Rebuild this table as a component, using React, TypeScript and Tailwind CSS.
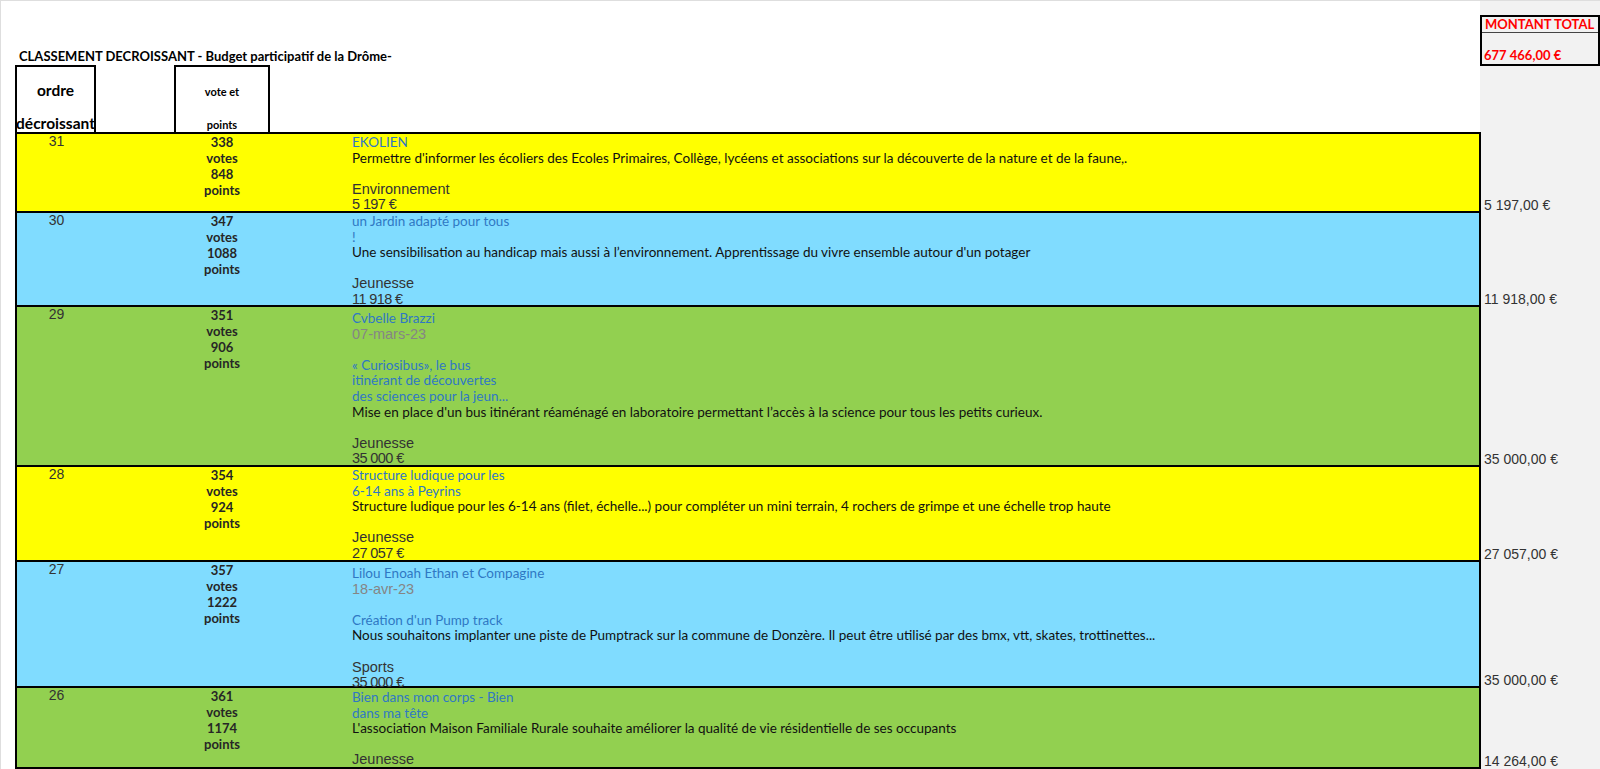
import React from "react";

// ── Types / data ───────────────────────────────────────────────────

type LineKind = "blue" | "desc" | "date" | "cat" | "sum" | "blank";
type Line = { k: LineKind; t?: string };

type Row = {
  rank: number;
  votes: number;
  points: number;
  bg: string;
  h: string;
  pt: string;
  amount: string;
  lines: Line[];
};

const lineClass: Record<LineKind, string> = {
  blue: "h-[15.6px] font-['Lato',sans-serif] text-[13.5px] text-[#2f78c4]",
  desc: "h-[15.6px] font-['Lato',sans-serif] text-[13.5px] text-[#111]",
  date: "h-[15.6px] font-['Liberation_Sans',Arial,sans-serif] text-[14.5px] text-[#858585]",
  cat: "h-[15.6px] font-['Liberation_Sans',Arial,sans-serif] text-[14.5px] text-[#333]",
  sum: "h-[13px] font-['Liberation_Sans',Arial,sans-serif] text-[14.5px] text-[#333] tracking-[-0.6px]",
  blank: "h-[15.6px]",
};

const rows: Row[] = [
  {
    rank: 31,
    votes: 338,
    points: 848,
    bg: "bg-[#ffff00]",
    h: "h-[81px] border-t-2",
    pt: "pt-[1px]",
    amount: "5 197,00 €",
    lines: [
      { k: "blue", t: "EKOLIEN" },
      {
        k: "desc",
        t: "Permettre d'informer les écoliers des Ecoles Primaires, Collège, lycéens et associations sur la découverte de la nature et de la faune,.",
      },
      { k: "blank" },
      { k: "cat", t: "Environnement" },
      { k: "sum", t: "5 197 €" },
    ],
  },
  {
    rank: 30,
    votes: 347,
    points: 1088,
    bg: "bg-[#80dcff]",
    h: "h-[94px]",
    pt: "pt-[1px]",
    amount: "11 918,00 €",
    lines: [
      { k: "blue", t: "un Jardin adapté pour tous" },
      { k: "blue", t: "!" },
      {
        k: "desc",
        t: "Une sensibilisation au handicap mais aussi à l’environnement. Apprentissage du vivre ensemble autour d'un potager",
      },
      { k: "blank" },
      { k: "cat", t: "Jeunesse" },
      { k: "sum", t: "11 918 €" },
    ],
  },
  {
    rank: 29,
    votes: 351,
    points: 906,
    bg: "bg-[#92d050]",
    h: "h-[160px]",
    pt: "pt-[4px]",
    amount: "35 000,00 €",
    lines: [
      { k: "blue", t: "Cvbelle Brazzi" },
      { k: "date", t: "07-mars-23" },
      { k: "blank" },
      { k: "blue", t: "« Curiosibus», le bus" },
      { k: "blue", t: "itinérant de découvertes" },
      { k: "blue", t: "des sciences pour la jeun..." },
      {
        k: "desc",
        t: "Mise en place d'un bus itinérant réaménagé en laboratoire permettant l’accès à la science pour tous les petits curieux.",
      },
      { k: "blank" },
      { k: "cat", t: "Jeunesse" },
      { k: "sum", t: "35 000 €" },
    ],
  },
  {
    rank: 28,
    votes: 354,
    points: 924,
    bg: "bg-[#ffff00]",
    h: "h-[95px]",
    pt: "pt-[1px]",
    amount: "27 057,00 €",
    lines: [
      { k: "blue", t: "Structure ludique pour les" },
      { k: "blue", t: "6-14 ans à Peyrins" },
      {
        k: "desc",
        t: "Structure ludique pour les 6-14 ans (filet, échelle...) pour compléter un mini terrain, 4 rochers de grimpe et une échelle trop haute",
      },
      { k: "blank" },
      { k: "cat", t: "Jeunesse" },
      { k: "sum", t: "27 057 €" },
    ],
  },
  {
    rank: 27,
    votes: 357,
    points: 1222,
    bg: "bg-[#80dcff]",
    h: "h-[126px]",
    pt: "pt-[4px]",
    amount: "35 000,00 €",
    lines: [
      { k: "blue", t: "Lilou Enoah Ethan et Compagine" },
      { k: "date", t: "18-avr-23" },
      { k: "blank" },
      { k: "blue", t: "Création d'un Pump track" },
      {
        k: "desc",
        t: "Nous souhaitons implanter une piste de Pumptrack sur la commune de Donzère. Il peut être utilisé par des bmx, vtt, skates, trottinettes...",
      },
      { k: "blank" },
      { k: "cat", t: "Sports" },
      { k: "sum", t: "35 000 €" },
    ],
  },
  {
    rank: 26,
    votes: 361,
    points: 1174,
    bg: "bg-[#92d050]",
    h: "h-[81px]",
    pt: "pt-[2px]",
    amount: "14 264,00 €",
    lines: [
      { k: "blue", t: "Bien dans mon corps - Bien" },
      { k: "blue", t: "dans ma tête" },
      {
        k: "desc",
        t: "L'association Maison Familiale Rurale souhaite améliorer la qualité de vie résidentielle de ses occupants",
      },
      { k: "blank" },
      { k: "cat", t: "Jeunesse" },
    ],
  },
];

// ── Row ────────────────────────────────────────────────────────────

function TableRow({ row }: { row: Row }) {
  return (
    <div className={`flex shrink-0 ${row.h.includes("border-t-2") ? "h-[81px]" : row.h}`}>
      <div className={`w-[1466px] shrink-0 flex border-black border-x-2 border-b-2 ${row.bg} ${row.h}`}>
        <div className="w-[79px] shrink-0 text-center font-['Liberation_Sans',Arial,sans-serif] text-[14px] leading-[14px] text-[#333]">
          {row.rank}
        </div>
        <div className="w-[78px] shrink-0" />
        <div className="w-[96px] shrink-0 flex flex-col items-center font-['Lato',sans-serif] font-bold text-[13px] leading-[16px] text-[#262626]">
          <span>{row.votes}</span>
          <span>votes</span>
          <span>{row.points}</span>
          <span>points</span>
        </div>
        <div className={`flex-1 min-h-0 pl-[82px] flex flex-col whitespace-nowrap ${row.pt}`}>
          {row.lines.map((l, i) => (
            <div key={i} className={`shrink-0 leading-[15.6px] ${lineClass[l.k]}`}>
              {l.t ?? ""}
            </div>
          ))}
        </div>
      </div>
      <div className="flex-1 bg-[#f2f2f2] flex items-end pl-[3px]">
        <span className="font-['Liberation_Sans',Arial,sans-serif] text-[14px] leading-[16px] text-[#333] whitespace-nowrap">
          {row.amount}
        </span>
      </div>
    </div>
  );
}

// ── Page ───────────────────────────────────────────────────────────

export default function App() {
  return (
    <div className="w-[1600px] h-[769px] overflow-hidden bg-white border-t border-l border-[#dedede] pl-[14px] flex flex-col">
      {/* Header zone */}
      <div className="flex h-[131px] shrink-0">
        <div className="w-[1466px] shrink-0 flex flex-col">
          <div className="mt-[47px] pl-[4px] h-[17px] leading-[17px] font-['Lato',sans-serif] font-bold text-[13px] text-black whitespace-nowrap">
            CLASSEMENT DECROISSANT - Budget participatif de la Drôme-
          </div>
          <div className="flex flex-1 font-['Lato',sans-serif] font-bold text-black">
            <div className="w-[81px] border-2 border-b-0 border-black flex flex-col items-center pt-[14px] text-[15.5px] leading-[18px] whitespace-nowrap">
              <span>ordre</span>
              <span className="mt-[15px]">décroissant</span>
            </div>
            <div className="w-[78px]" />
            <div className="w-[96px] border-2 border-b-0 border-black flex flex-col items-center pt-[18px] text-[11px] leading-[13px]">
              <span>vote et</span>
              <span className="mt-[20px]">points</span>
            </div>
          </div>
        </div>
        <div className="flex-1 bg-[#f2f2f2] -ml-[1px]">
          <div className="mt-[14px] h-[51px] border-2 border-black flex flex-col font-['Lato',sans-serif] font-bold text-[#ff0000]">
            <div className="h-[16px] border-b border-[#444] pl-[3px] text-[13px] leading-[15px] whitespace-nowrap">
              MONTANT TOTAL
            </div>
            <div className="flex-1 flex items-end pl-[2px] pb-[1px] text-[13px] leading-[16px] whitespace-nowrap">
              677 466,00 €
            </div>
          </div>
        </div>
      </div>

      {/* Rows */}
      {rows.map((r) => (
        <TableRow key={r.rank} row={r} />
      ))}
    </div>
  );
}
